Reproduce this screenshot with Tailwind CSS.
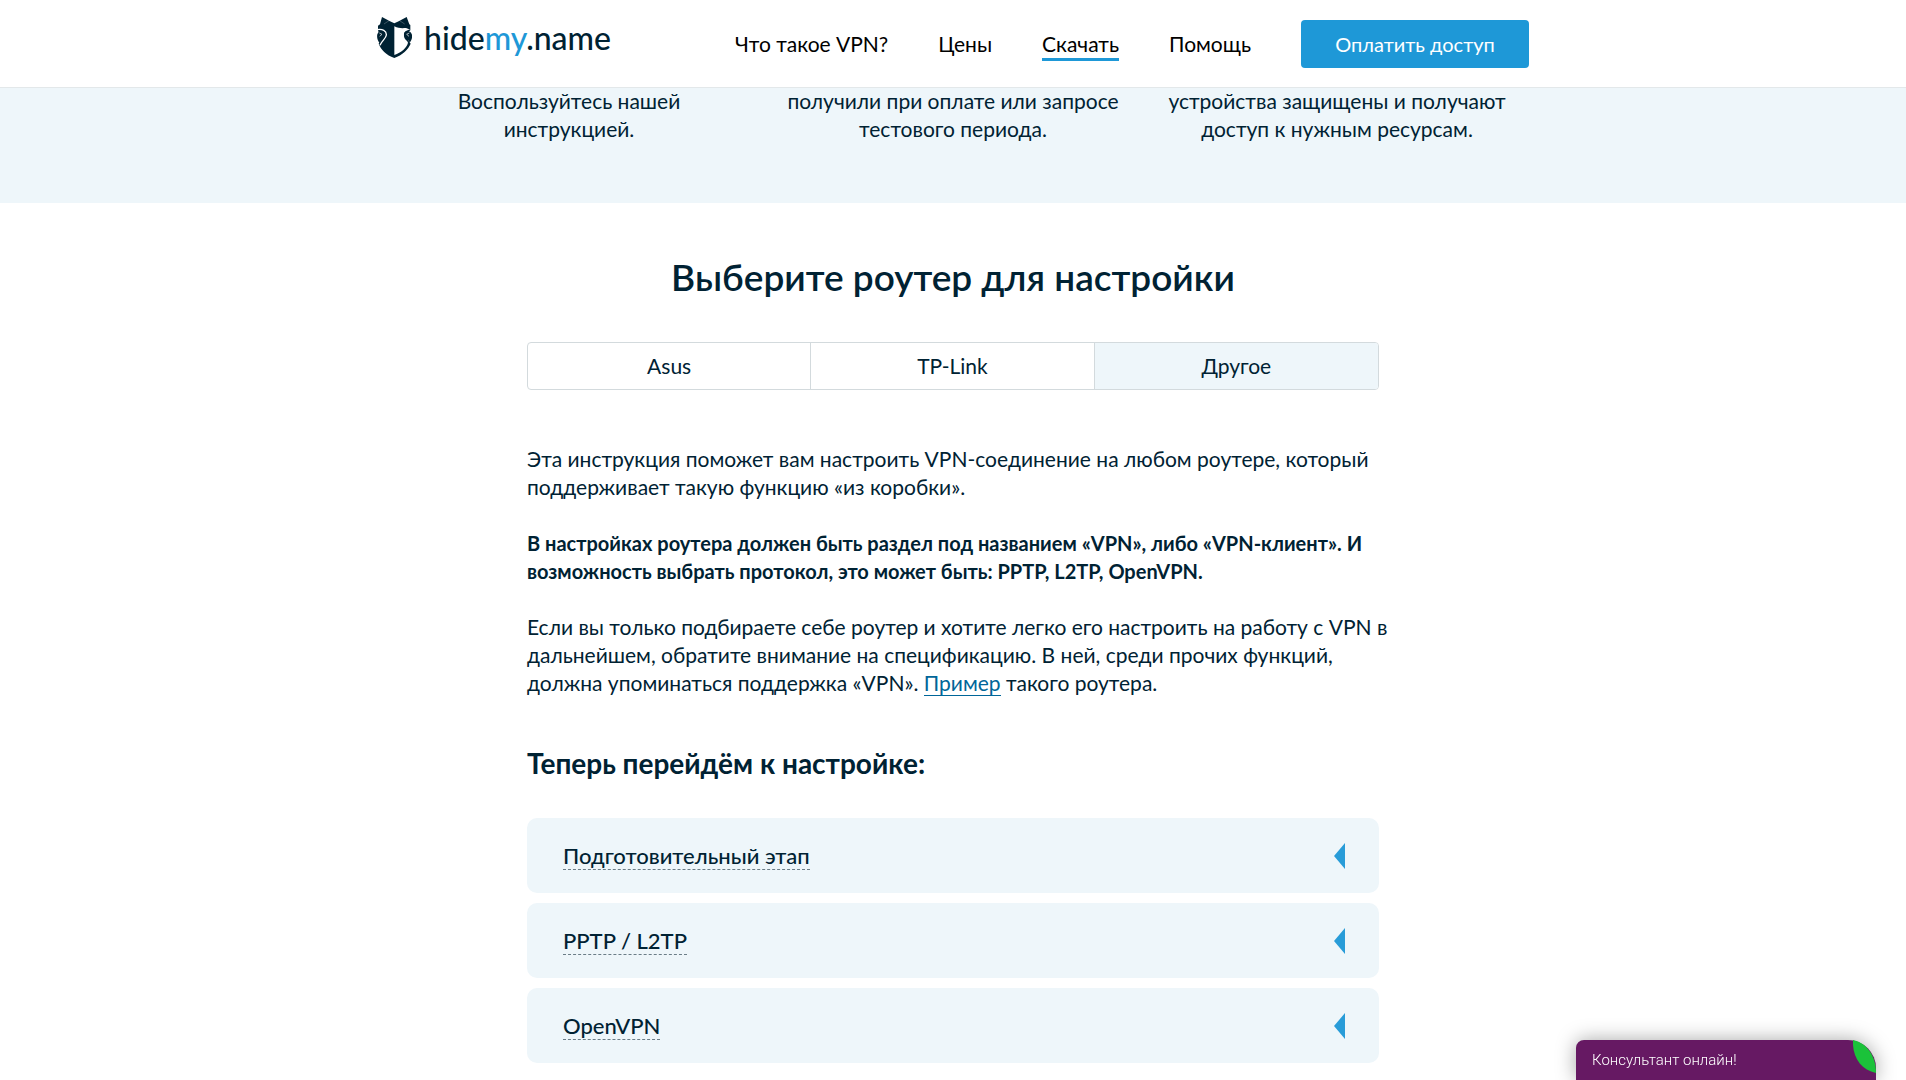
<!DOCTYPE html>
<html lang="ru">
<head>
<meta charset="utf-8">
<meta name="viewport" content="width=device-width, initial-scale=1">
<title>Настройка VPN на роутере — hidemy.name</title>
<script src="https://cdn.jsdelivr.net/npm/@tailwindcss/browser@4"></script>
</head>
<body class="bg-white font-['Lato','Open_Sans',sans-serif] text-[21px] leading-7 text-[#002233] overflow-x-hidden">
<header class="sticky top-0 z-10 h-22 bg-white border-b border-[#e3e8ea]">
  <div class="mx-auto flex h-full max-w-[1152px] items-center justify-between">
    <a href="#" class="flex items-center gap-3 pb-3" aria-label="hidemy.name">
      <svg class="h-[41px] w-[35px]" viewBox="23 24 105 123" aria-hidden="true">
        <path d="M38 24L62 37L75 43L88 37L112 24L120 46L123 48V64L116 70L118 96L124 104C117 121 99 138 75 147C51 138 34 121 28 104L34 90L26 64V50L32 46Z" fill="#002233"/>
        <path d="M75 52C88 58 97 58 110 57L123 62C111 62 103 69 104 80C104 92 115 94 116 101C112 117 96 130 75 138Z" fill="#fff"/>
        <path d="M23 62C39 59 52 65 51 78C50 89 38 94 32 109" fill="none" stroke="#fff" stroke-width="4"/>
        <path d="M36 67C46 66 50 76 45 83C41 90 32 92 31 102C24 94 22 83 24 76C26 70 30 67 36 67Z" fill="#002233"/>
        <path d="M114 66C104 66 102 76 106 83C110 90 119 91 121 101C128 93 130 82 127 75C125 69 120 66 114 66Z" fill="#002233"/>
        <path d="M30 72L38 76L31 82M120 72L112 76L119 82" fill="none" stroke="#fff" stroke-width="2"/>
        <path d="M44 45L59 35M106 45L91 35" fill="none" stroke="#fff" stroke-opacity=".35" stroke-width="2"/>
      </svg>
      <span class="text-[32px] leading-10 font-medium">hide<span class="text-[#1e98d7]">my</span>.name</span>
    </a>
    <nav class="flex items-center gap-[50px] text-black">
      <a href="#">Что такое VPN?</a>
      <a href="#">Цены</a>
      <a href="#" class="relative">Скачать<span class="absolute inset-x-0 top-full h-[3px] bg-[#1e98d7]"></span></a>
      <a href="#">Помощь</a>
      <a href="#" class="flex h-12 w-57 items-center justify-center rounded bg-[#1e98d7] text-xl text-white">Оплатить доступ</a>
    </nav>
  </div>
</header>
<main>
  <section class="-mt-px bg-[#eef6fa] pb-[60px]">
    <div class="mx-auto grid max-w-[1152px] grid-cols-3 text-center whitespace-nowrap">
      <p>Воспользуйтесь нашей<br>инструкцией.</p>
      <p>получили при оплате или запросе<br>тестового периода.</p>
      <p>устройства защищены и получают<br>доступ к нужным ресурсам.</p>
    </div>
  </section>
  <section class="mx-auto w-full max-w-[852px] pt-12">
    <h1 class="text-center text-[37px] leading-13 font-semibold">Выберите роутер для настройки</h1>
    <div class="mt-[39px] grid h-12 grid-cols-3 divide-x divide-[#d3dadd] overflow-hidden rounded border border-[#d3dadd]" role="tablist">
      <button role="tab">Asus</button>
      <button role="tab">TP-Link</button>
      <button role="tab" aria-selected="true" class="bg-[#eef6fa]">Другое</button>
    </div>
    <div class="mt-[55px] space-y-7 whitespace-nowrap">
      <p>Эта инструкция поможет вам настроить VPN-соединение на любом роутере, который<br>поддерживает такую функцию «из коробки».</p>
      <p class="text-xl leading-7 font-bold">В настройках роутера должен быть раздел под названием «VPN», либо «VPN-клиент». И<br>возможность выбрать протокол, это может быть: PPTP, L2TP, OpenVPN.</p>
      <p>Если вы только подбираете себе роутер и хотите легко его настроить на работу с VPN в<br>дальнейшем, обратите внимание на спецификацию. В ней, среди прочих функций,<br>должна упоминаться поддержка «VPN». <a href="#" class="border-b border-[#006699] text-[#006699]">Пример</a> такого роутера.</p>
    </div>
    <h2 class="mt-12 text-[28px] leading-9 font-bold">Теперь перейдём к настройке:</h2>
    <div class="mt-[37px] space-y-2.5 text-[22px] font-medium">
      <button class="flex h-[75px] w-full items-center justify-between rounded-[10px] bg-[#eef6fa] pt-px pr-[34px] pl-9"><span class="border-b border-dashed border-[#6b7d87] leading-[26px]">Подготовительный этап</span><svg class="h-[26px] w-[11px]" viewBox="0 0 11 26" aria-hidden="true"><path d="M11 0v26L0 13z" fill="#289cd8"/></svg></button>
      <button class="flex h-[75px] w-full items-center justify-between rounded-[10px] bg-[#eef6fa] pt-px pr-[34px] pl-9"><span class="border-b border-dashed border-[#6b7d87] leading-[26px]">PPTP / L2TP</span><svg class="h-[26px] w-[11px]" viewBox="0 0 11 26" aria-hidden="true"><path d="M11 0v26L0 13z" fill="#289cd8"/></svg></button>
      <button class="flex h-[75px] w-full items-center justify-between rounded-[10px] bg-[#eef6fa] pt-px pr-[34px] pl-9"><span class="border-b border-dashed border-[#6b7d87] leading-[26px]">OpenVPN</span><svg class="h-[26px] w-[11px]" viewBox="0 0 11 26" aria-hidden="true"><path d="M11 0v26L0 13z" fill="#289cd8"/></svg></button>
    </div>
  </section>
</main>
<button class="fixed right-[30px] bottom-0 flex h-10 w-75 items-center rounded-tl-lg rounded-tr-[28px] bg-[#661963] px-4 font-['Roboto','Liberation_Sans',sans-serif] text-[15px] font-light text-white shadow-[0_0_20px_rgba(0,0,0,0.35)]">Консультант онлайн!
  <svg class="absolute top-0 right-0 h-[33px] w-[23px]" viewBox="0 0 23 33" aria-hidden="true"><path d="M0 0C14 3 23 16 23 33C8 30-1 17 0 0z" fill="#1bc23a"/></svg>
</button>
</body>
</html>
